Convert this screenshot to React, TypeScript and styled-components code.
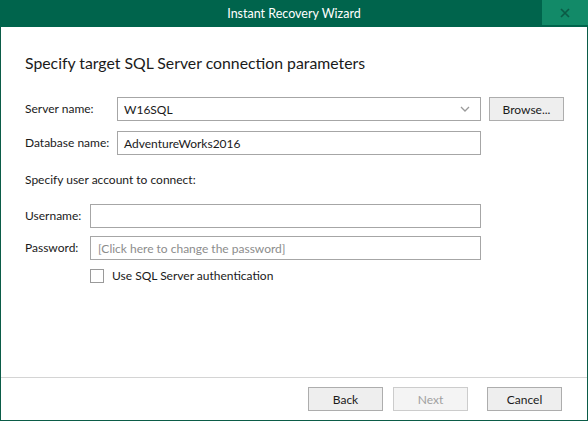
import React, { useState } from "react";
import styled, { createGlobalStyle } from "styled-components";

const GlobalStyle = createGlobalStyle`
  html, body {
    margin: 0;
    padding: 0;
    background: #ffffff;
  }
  body {
    font-family: Lato, "Noto Sans", Arial, sans-serif;
    font-size: 12px;
    color: #1a1a1a;
  }
`;

const Window = styled.div`
  width: 588px;
  height: 421px;
  box-sizing: border-box;
  display: flex;
  flex-direction: column;
  border: 1px solid #0b5c48;
  border-top: none;
  background: #ffffff;
`;

const TitleBar = styled.div`
  height: 27px;
  flex-shrink: 0;
  background: #00644c;
  display: flex;
  align-items: flex-start;
  margin: 0 -1px;
`;

const TitleText = styled.div`
  flex: 1;
  height: 27px;
  line-height: 27px;
  text-align: center;
  color: #ffffff;
  font-size: 12.5px;
  padding-left: 46px;
`;

const CloseButton = styled.button`
  width: 46px;
  height: 25px;
  border: none;
  padding: 0;
  background: #128a68;
  display: flex;
  align-items: center;
  justify-content: center;
  cursor: pointer;
`;

const Body = styled.div`
  flex: 1;
  padding: 0 24px;
  display: flex;
  flex-direction: column;
`;

const Heading = styled.h1`
  margin: 25px 0 0 0;
  font-size: 15.8px;
  font-weight: 400;
  line-height: 22px;
  color: #1a1a1a;
`;

const ServerGrid = styled.div`
  margin-top: 23px;
  display: grid;
  grid-template-columns: 84px 364px 74px;
  column-gap: 8px;
  row-gap: 10px;
  align-items: center;
`;

const AccountGrid = styled.div`
  margin-top: 16px;
  display: grid;
  grid-template-columns: 65px 391px;
  row-gap: 8px;
  align-items: center;
`;

const Label = styled.label`
  font-size: 12px;
  line-height: 16px;
  color: #1a1a1a;
  white-space: nowrap;
`;

const Section = styled.div`
  margin-top: 17px;
  font-size: 12px;
  line-height: 16px;
`;

const Field = styled.div<{ $placeholder?: boolean }>`
  height: 24px;
  box-sizing: border-box;
  border: 1px solid #a6a6a6;
  background: #ffffff;
  display: flex;
  align-items: center;
  padding: 0 7px 0 ${(p) => (p.$placeholder ? "7px" : "6px")};
  font-size: 12px;
  color: ${(p) => (p.$placeholder ? "#8c8c8c" : "#1a1a1a")};
  white-space: nowrap;
  overflow: hidden;
`;

const ComboField = styled(Field)`
  justify-content: space-between;
  padding-right: 10px;
`;

const Button = styled.button<{ $disabled?: boolean }>`
  width: 75px;
  height: 24px;
  box-sizing: border-box;
  border: 1px solid ${(p) => (p.$disabled ? "#cccccc" : "#adadad")};
  background: ${(p) => (p.$disabled ? "#f4f4f4" : "#eeeeee")};
  color: ${(p) => (p.$disabled ? "#a0a0a0" : "#1a1a1a")};
  font-family: inherit;
  font-size: 12px;
  padding: 0;
  cursor: ${(p) => (p.$disabled ? "default" : "pointer")};
`;

const CheckRow = styled.label`
  margin-top: 8px;
  margin-left: 65px;
  display: flex;
  align-items: center;
  gap: 8px;
  cursor: pointer;
`;

const CheckBox = styled.span<{ $checked: boolean }>`
  width: 14px;
  height: 14px;
  box-sizing: border-box;
  border: 1px solid #9a9a9a;
  background: #ffffff;
  display: flex;
  align-items: center;
  justify-content: center;
`;

const Footer = styled.div`
  height: 43px;
  flex-shrink: 0;
  border-top: 1px solid #d4d4d4;
  display: flex;
  align-items: center;
  justify-content: flex-end;
  padding: 0 25px 0 0;
  box-sizing: border-box;
`;

const NavGroup = styled.div`
  display: flex;
  gap: 10px;
  margin-right: 19px;
`;

const Chevron = () => (
  <svg width="10" height="6" viewBox="0 0 10 6">
    <path d="M1 1 L5 5 L9 1" fill="none" stroke="#9a9a9a" strokeWidth="1.3" />
  </svg>
);

export default function App() {
  const [sqlAuth, setSqlAuth] = useState(false);

  return (
    <>
      <GlobalStyle />
      <Window>
        <TitleBar>
          <TitleText>Instant Recovery Wizard</TitleText>
          <CloseButton aria-label="Close">
            <svg width="10" height="10" viewBox="0 0 10 10">
              <path
                d="M1 1 L9 9 M9 1 L1 9"
                stroke="#0b5a45"
                strokeWidth="1.7"
              />
            </svg>
          </CloseButton>
        </TitleBar>
        <Body>
          <Heading>Specify target SQL Server connection parameters</Heading>
          <ServerGrid>
            <Label>Server name:</Label>
            <ComboField>
              <span>W16SQL</span>
              <Chevron />
            </ComboField>
            <Button>Browse...</Button>
            <Label>Database name:</Label>
            <Field>AdventureWorks2016</Field>
          </ServerGrid>
          <Section>Specify user account to connect:</Section>
          <AccountGrid>
            <Label>Username:</Label>
            <Field />
            <Label>Password:</Label>
            <Field $placeholder>[Click here to change the password]</Field>
          </AccountGrid>
          <CheckRow onClick={() => setSqlAuth(!sqlAuth)}>
            <CheckBox $checked={sqlAuth}>
              {sqlAuth && (
                <svg width="10" height="10" viewBox="0 0 10 10">
                  <path d="M1 5 L4 8 L9 2" fill="none" stroke="#1a1a1a" strokeWidth="1.4" />
                </svg>
              )}
            </CheckBox>
            <span>Use SQL Server authentication</span>
          </CheckRow>
        </Body>
        <Footer>
          <NavGroup>
            <Button>Back</Button>
            <Button $disabled>Next</Button>
          </NavGroup>
          <Button>Cancel</Button>
        </Footer>
      </Window>
    </>
  );
}
